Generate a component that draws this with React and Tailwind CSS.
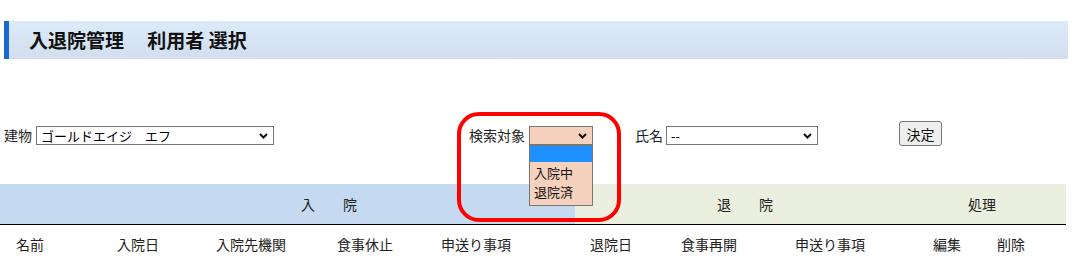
import React from "react";

const Chevron = () => (
  <svg width="9" height="6" viewBox="0 0 9 6" className="shrink-0">
    <polyline points="1,1 4.5,4.5 8,1" fill="none" stroke="#111" strokeWidth="2" />
  </svg>
);

function FakeSelect({ width, bg = "bg-white", text, children }) {
  return (
    <div className="relative">
      <div
        className={`flex items-center justify-between h-[19px] border border-[#767676] ${bg} pl-[4px] pr-[5px] text-[13px] leading-none text-black`}
        style={{ width }}
      >
        <span className="whitespace-pre">{text}</span>
        <Chevron />
      </div>
      {children}
    </div>
  );
}

export default function App() {
  return (
    <div
      className="relative w-[1074px] h-[272px] overflow-hidden bg-white text-[14px] text-[#222]"
      style={{ fontFamily: '"Noto Sans CJK JP", "Noto Sans", sans-serif' }}
    >
      {/* title bar */}
      <div className="pt-[21px] pl-[4px] pr-[6px]">
        <div className="flex items-center h-[38px] border-l-[5px] border-[#1769d4] bg-gradient-to-b from-[#dceaf9] to-[#d2deee] pl-[20px]">
          <span className="text-[19px] font-bold text-[#111] whitespace-pre">
            入退院管理　 利用者 選択
          </span>
        </div>
      </div>

      {/* controls */}
      <div className="flex items-end mt-[62px] h-[25px]">
        <div className="flex items-center ml-[4px] gap-[4px]">
          <span>建物</span>
          <FakeSelect width="238px" text="ゴールドエイジ　エフ" />
        </div>
        <div className="flex items-center ml-[195px] gap-[4px]">
          <span>検索対象</span>
          <FakeSelect width="64px" bg="bg-[#f6d1bd]" text="">
            <div className="absolute left-0 top-full w-[64px] h-[61px] border border-[#767676] bg-[#f6d1bd] text-[13px] z-10">
              <div className="h-[16px] bg-[#1e90ff]" />
              <div className="h-[19px] flex items-center pl-[4px] mt-[1px] text-[#111]">入院中</div>
              <div className="h-[19px] flex items-center pl-[4px] text-[#111]">退院済</div>
            </div>
          </FakeSelect>
        </div>
        <div className="flex items-center ml-[42px] gap-[3px]">
          <span>氏名</span>
          <FakeSelect width="152px" text="--" />
        </div>
        <button className="ml-[81px] w-[43px] h-[25px] border border-[#767676] rounded-[3px] bg-[#efefef] text-[14px] text-[#111] leading-none">
          決定
        </button>
      </div>

      {/* table header */}
      <div className="mt-[38px] w-[1066px]">
        <div className="flex h-[41px] border-b border-black">
          <div className="w-[575px] bg-[#c5d9f0] flex items-center pl-[301px] whitespace-pre">入　　院</div>
          <div className="flex-1 bg-[#ebefdf] flex items-center">
            <div className="w-[340px] flex justify-center whitespace-pre">退　　院</div>
            <div className="w-[134px] flex justify-center">処理</div>
          </div>
        </div>
        <div className="grid grid-cols-[101px_99px_121px_104px_149px_91px_114px_138px_64px_1fr] items-center h-[38px] pl-[16px] text-[#222]">
          <span>名前</span>
          <span>入院日</span>
          <span>入院先機関</span>
          <span>食事休止</span>
          <span>申送り事項</span>
          <span>退院日</span>
          <span>食事再開</span>
          <span>申送り事項</span>
          <span>編集</span>
          <span>削除</span>
        </div>
      </div>

      {/* red annotation */}
      <div className="absolute left-[457px] top-[112px] w-[164px] h-[110px] border-[4px] border-[#ff0000] rounded-[22px] pointer-events-none z-20" />
    </div>
  );
}
